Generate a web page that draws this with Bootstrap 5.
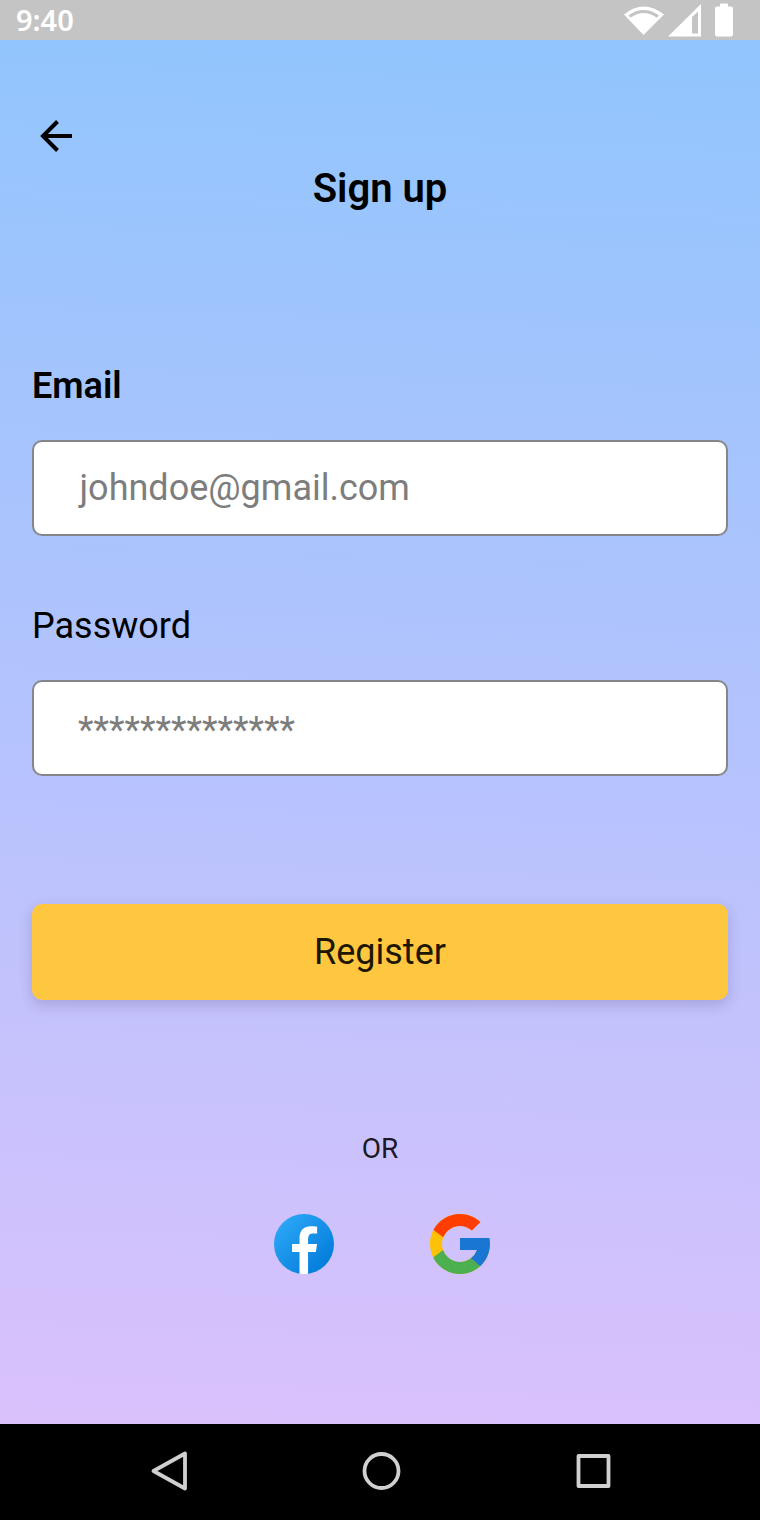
<!DOCTYPE html>
<html lang="en">
<head>
<meta charset="utf-8">
<meta name="viewport" content="width=device-width, initial-scale=1">
<title>Sign up</title>
<link href="https://cdn.jsdelivr.net/npm/bootstrap@5.3.0/dist/css/bootstrap.min.css" rel="stylesheet">
<style>
  body { font-family: Roboto, "Liberation Sans", sans-serif; color: #000; }
  .phone { height: 1520px; background: #000; }
  .status-bar { height: 40px; padding: 0 24px 0 16px; background: #c4c4c4; color: #fff; }
  .clock { font: 600 29px/42px "Noto Sans", sans-serif; }
  .screen { height: 1384px; padding: 72px 32px 0; background: linear-gradient(182deg, #91c5fd 0%, #b4c3fd 50%, #dac1fc 100%); }
  .back-btn { width: 48px; height: 48px; }
  .title { font-size: 40px; font-weight: 600; line-height: 48px; margin: 5px 0 0; }
  .form-area { margin-top: 149px; }
  .form-label { font-size: 36px; line-height: 48px; }
  .email-label { margin-bottom: 30px; font-weight: 600; }
  .password-label { margin: 66px 0 30px; }
  .form-control.field { height: 96px; padding: 0 38px; text-indent: 7.5px; border: 2px solid #85868a; border-radius: 10px; font-size: 36px; background: #fff; }
  .form-control.secret { padding-top: 3px; text-indent: 6px; }
  .field::placeholder { color: #7d7d7d; opacity: 1; }
  .register { --bs-btn-bg: #ffc73f; --bs-btn-hover-bg: #ffc73f; --bs-btn-border-color: transparent; height: 96px; margin-top: 128px; border: 0; border-radius: 10px; font-size: 36px; box-shadow: 0 5px 14px rgba(50,40,80,.2); color: #1d1600; }
  .divider-text { margin: 128px 0 0; font-size: 28px; line-height: 42px; color: #1c1825; }
  .socials { gap: 84px; margin-top: 38px; padding-left: 4px; }
  .nav-keys { height: 96px; padding: 0 145px; }
</style>
</head>
<body>
<main class="phone d-flex flex-column overflow-hidden">
  <header class="status-bar d-flex align-items-center justify-content-between">
    <span class="clock">9:40</span>
    <svg width="112" height="40" viewBox="624 0 112 40" fill="#fff" aria-hidden="true">
      <path d="M624 14.500Q643.500-1.500 664 14.500L643.500 35Z"/>
      <path d="M629.500 16.500Q643.500 6.500 658 16.500" fill="none" stroke="#c4c4c4" stroke-width="3"/>
      <path fill-rule="evenodd" d="M668 36.500L701 4V36.500ZM692 17V33.500H698V11.500Z"/>
      <path d="M717 6.500H720V4.500Q720 3.500 721 3.500H727Q728 3.500 728 4.500V6.500H731Q733 6.500 733 8.500V34Q733 36.500 731 36.500H717Q715 36.500 715 34V8.500Q715 6.500 717 6.500Z"/>
    </svg>
  </header>

  <section class="screen d-flex flex-column">
    <button class="btn p-0 border-0 back-btn" aria-label="Back">
      <svg class="d-block" width="48" height="48" viewBox="32 112 48 48" fill="none" stroke="#000" stroke-width="4"><path d="M72 136H43M57.500 121.500L43 136L57.500 150.500"/></svg>
    </button>
    <h1 class="title text-center">Sign up</h1>
    <form class="form-area d-flex flex-column">
      <label class="form-label email-label" for="email">Email</label>
      <input class="form-control field" id="email" type="email" placeholder="johndoe@gmail.com">
      <label class="form-label password-label" for="password">Password</label>
      <input class="form-control field secret" id="password" type="password" placeholder="**************">
      <button class="btn register w-100 p-0" type="button">Register</button>
    </form>
    <p class="divider-text text-center">OR</p>
    <div class="socials d-flex justify-content-center">
      <svg width="72" height="72" viewBox="0 0 48 48" role="img" aria-label="Facebook">
        <defs><linearGradient id="fb" x1="9.993" x2="40.615" y1="9.993" y2="40.615" gradientUnits="userSpaceOnUse"><stop offset="0" stop-color="#2aa4f4"/><stop offset="1" stop-color="#007ad9"/></linearGradient></defs>
        <path fill="url(#fb)" d="M24 4A20 20 0 1 0 24 44A20 20 0 1 0 24 4Z"/>
        <path fill="#fff" d="M26.707 29.301h5.176l.813-5.258h-5.989v-2.874c0-2.184.714-4.121 2.757-4.121h3.283V12.460c-.577-.078-1.797-.248-4.102-.248-4.814 0-7.636 2.542-7.636 8.334v3.498H16.060v5.258h4.948v14.452C21.988 43.900 22.981 44 24 44c.921 0 1.820-.084 2.707-.204V29.301z"/>
      </svg>
      <svg width="72" height="72" viewBox="0 0 48 48" role="img" aria-label="Google">
        <path fill="#ffc107" d="M43.611 20.083H42V20H24v8h11.303c-1.649 4.657-6.080 8-11.303 8-6.627 0-12-5.373-12-12s5.373-12 12-12c3.059 0 5.842 1.154 7.961 3.039l5.657-5.657C34.046 6.053 29.268 4 24 4 12.955 4 4 12.955 4 24s8.955 20 20 20 20-8.955 20-20c0-1.341-.138-2.650-.389-3.917z"/>
        <path fill="#ff3d00" d="M6.306 14.691l6.571 4.819C14.655 15.108 18.961 12 24 12c3.059 0 5.842 1.154 7.961 3.039l5.657-5.657C34.046 6.053 29.268 4 24 4 16.318 4 9.656 8.337 6.306 14.691z"/>
        <path fill="#4caf50" d="M24 44c5.166 0 9.860-1.977 13.409-5.192l-6.190-5.238A11.910 11.910 0 0 1 24 36c-5.202 0-9.619-3.317-11.283-7.946l-6.522 5.025C9.505 39.556 16.227 44 24 44z"/>
        <path fill="#1976d2" d="M43.611 20.083H42V20H24v8h11.303a12.040 12.040 0 0 1-4.087 5.571l.003-.002 6.190 5.238C36.971 39.205 44 34 44 24c0-1.341-.138-2.650-.389-3.917z"/>
      </svg>
    </div>
  </section>

  <nav class="nav-keys d-flex align-items-center justify-content-between" aria-label="System navigation">
    <svg width="48" height="48" viewBox="145 1448 48 48" fill="none" stroke="#d0d0d0" stroke-width="3.800" stroke-linejoin="round"><path d="M185 1453.500V1488.500L153.500 1471Z"/></svg>
    <svg width="48" height="48" viewBox="356 1448 48 48" fill="none" stroke="#d0d0d0" stroke-width="3.800"><circle cx="381.500" cy="1471" r="17"/></svg>
    <svg width="48" height="48" viewBox="567 1448 48 48" fill="none" stroke="#d0d0d0" stroke-width="3.800" stroke-linejoin="round"><rect x="578.500" y="1456" width="30" height="30"/></svg>
  </nav>
</main>
<script src="https://cdn.jsdelivr.net/npm/bootstrap@5.3.0/dist/js/bootstrap.bundle.min.js"></script>
</body>
</html>
